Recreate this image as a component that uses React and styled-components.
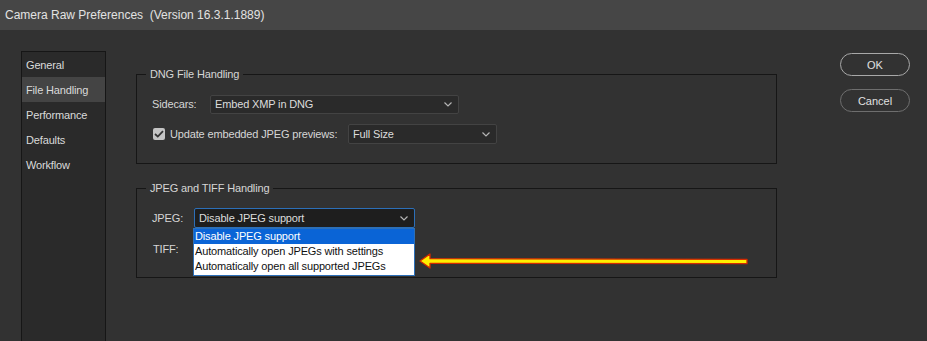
import React from "react";
import styled, { createGlobalStyle } from "styled-components";

const Global = createGlobalStyle`
  html, body { margin: 0; padding: 0; background: #323232; }
  body { font-family: "Liberation Sans", Arial, sans-serif; overflow: hidden; }
  * { box-sizing: border-box; }
`;

const Window = styled.div`
  width: 927px;
  height: 341px;
  background: #323232;
  display: flex;
  flex-direction: column;
  overflow: hidden;
  color: #d6d6d6;
  font-size: 11px;
  letter-spacing: -0.15px;
`;

const TitleBar = styled.div`
  height: 30px;
  flex: none;
  background: #464646;
  display: flex;
  align-items: center;
  padding-left: 5px;
  font-size: 12px;
  letter-spacing: 0;
  color: #e2e2e2;
  white-space: pre;
`;

const Body = styled.div`
  flex: 1;
  display: flex;
  padding: 21px 0 0 21px;
  min-height: 0;
`;

const Sidebar = styled.ul`
  list-style: none;
  margin: 0;
  padding: 0;
  width: 85px;
  height: 320px;
  flex: none;
  background: #2a2a2a;
  border: 1px solid #161616;
`;

const NavItem = styled.li`
  height: 25px;
  display: flex;
  align-items: center;
  padding-left: 4px;
  color: #dadada;
  background: ${(p) => (p.$active ? "#444444" : "transparent")};
`;

const Main = styled.div`
  margin-left: 30px;
  width: 641px;
  flex: none;
  display: flex;
  flex-direction: column;
  gap: 18px;
  padding-top: 17px;
`;

const Group = styled.fieldset`
  margin: 0;
  border: 1px solid #161616;
  padding: 0 0 0 15px;
  height: 96px;
  flex: none;
  display: flex;
  flex-direction: column;
`;

const Legend = styled.legend`
  padding: 0 4px;
  margin-left: -6px;
  color: #d6d6d6;
  line-height: 12px;
`;

const Row = styled.div`
  display: flex;
  align-items: center;
  height: 20px;
  margin-top: ${(p) => p.$mt || 0}px;
  white-space: nowrap;
`;

const Label = styled.span`
  width: ${(p) => p.$w}px;
  flex: none;
  color: #d6d6d6;
  padding-left: ${(p) => p.$pl || 0}px;
`;

const Select = styled.div`
  width: ${(p) => p.$w}px;
  height: ${(p) => p.$h || 19}px;
  flex: none;
  border: 1px solid ${(p) => (p.$focus ? "#2c6fb8" : "#434343")};
  border-radius: 2px;
  background: ${(p) => (p.$focus ? "#1e1e1e" : "#2a2a2a")};
  display: flex;
  align-items: center;
  justify-content: space-between;
  padding: 0 6px 0 4px;
  color: #dcdcdc;
  position: relative;
`;

const Chevron = () => (
  <svg width="8" height="5" viewBox="0 0 8 5">
    <path d="M0.5 0.5 L4 4 L7.5 0.5" fill="none" stroke="#b4b4b4" strokeWidth="1.2" />
  </svg>
);

const Check = styled.div`
  width: 12px;
  height: 12px;
  border-radius: 2px;
  background: #c4c4c4;
  display: flex;
  align-items: center;
  justify-content: center;
  margin-left: 1px;
  margin-right: 5px;
  flex: none;
`;

const Menu = styled.ul`
  position: absolute;
  left: -2px;
  top: 19px;
  width: 222px;
  margin: 0;
  padding: 0 0 1px 0;
  list-style: none;
  background: #ffffff;
  border: 1px solid #2c6fb8;
  z-index: 5;
`;

const MenuItem = styled.li`
  height: 15px;
  line-height: 15px;
  padding-left: 1px;
  color: ${(p) => (p.$sel ? "#ffffff" : "#111111")};
  background: ${(p) => (p.$sel ? "#0a64d6" : "transparent")};
  white-space: nowrap;
`;

const Arrow = styled.svg`
  position: absolute;
  left: 417px;
  top: 251px;
  z-index: 6;
`;

const Buttons = styled.div`
  margin-left: 63px;
  display: flex;
  flex-direction: column;
  gap: 13px;
  padding-top: 2px;
`;

const Button = styled.button`
  width: 70px;
  height: 23px;
  border-radius: 12px;
  background: transparent;
  border: 1px solid ${(p) => (p.$primary ? "#a8a8a8" : "#6e6e6e")};
  color: #e0e0e0;
  font-family: "Liberation Sans", Arial, sans-serif;
  font-size: 11px;
  padding: 0;
`;

export default function App() {
  return (
    <Window>
      <Global />
      <TitleBar>{"Camera Raw Preferences  (Version 16.3.1.1889)"}</TitleBar>
      <Body>
        <Sidebar>
          <NavItem>General</NavItem>
          <NavItem $active>File Handling</NavItem>
          <NavItem>Performance</NavItem>
          <NavItem>Defaults</NavItem>
          <NavItem>Workflow</NavItem>
        </Sidebar>
        <Main>
          <Group>
            <Legend>DNG File Handling</Legend>
            <Row $mt={14}>
              <Label $w={58}>Sidecars:</Label>
              <Select $w={249}>
                <span>Embed XMP in DNG</span>
                <Chevron />
              </Select>
            </Row>
            <Row $mt={10}>
              <Check>
                <svg width="10" height="8" viewBox="0 0 10 8">
                  <path d="M1 4 L3.8 6.6 L9 1.2" fill="none" stroke="#333" strokeWidth="1.8" />
                </svg>
              </Check>
              <Label $w={178}>Update embedded JPEG previews:</Label>
              <Select $w={149} $h={20}>
                <span>Full Size</span>
                <Chevron />
              </Select>
            </Row>
          </Group>
          <Group>
            <Legend>JPEG and TIFF Handling</Legend>
            <Row $mt={14}>
              <Label $w={42}>JPEG:</Label>
              <Select $w={221} $h={20} $focus>
                <span>Disable JPEG support</span>
                <Chevron />
                <Menu>
                  <MenuItem $sel>Disable JPEG support</MenuItem>
                  <MenuItem>Automatically open JPEGs with settings</MenuItem>
                  <MenuItem>Automatically open all supported JPEGs</MenuItem>
                </Menu>
              </Select>
            </Row>
            <Row $mt={11}>
              <Label $w={42} $pl={1}>TIFF:</Label>
            </Row>
          </Group>
        </Main>
        <Buttons>
          <Button $primary>OK</Button>
          <Button>Cancel</Button>
        </Buttons>
      </Body>
      <Arrow width="336" height="20" viewBox="0 0 336 20">
        <path
          d="M3 10 L13 3 L13 7.7 L330 8.3 L330 12.7 L13 12.3 L13 17 Z"
          fill="#ffee00"
          stroke="#d42a00"
          strokeWidth="1.3"
          strokeLinejoin="round"
        />
      </Arrow>
    </Window>
  );
}
